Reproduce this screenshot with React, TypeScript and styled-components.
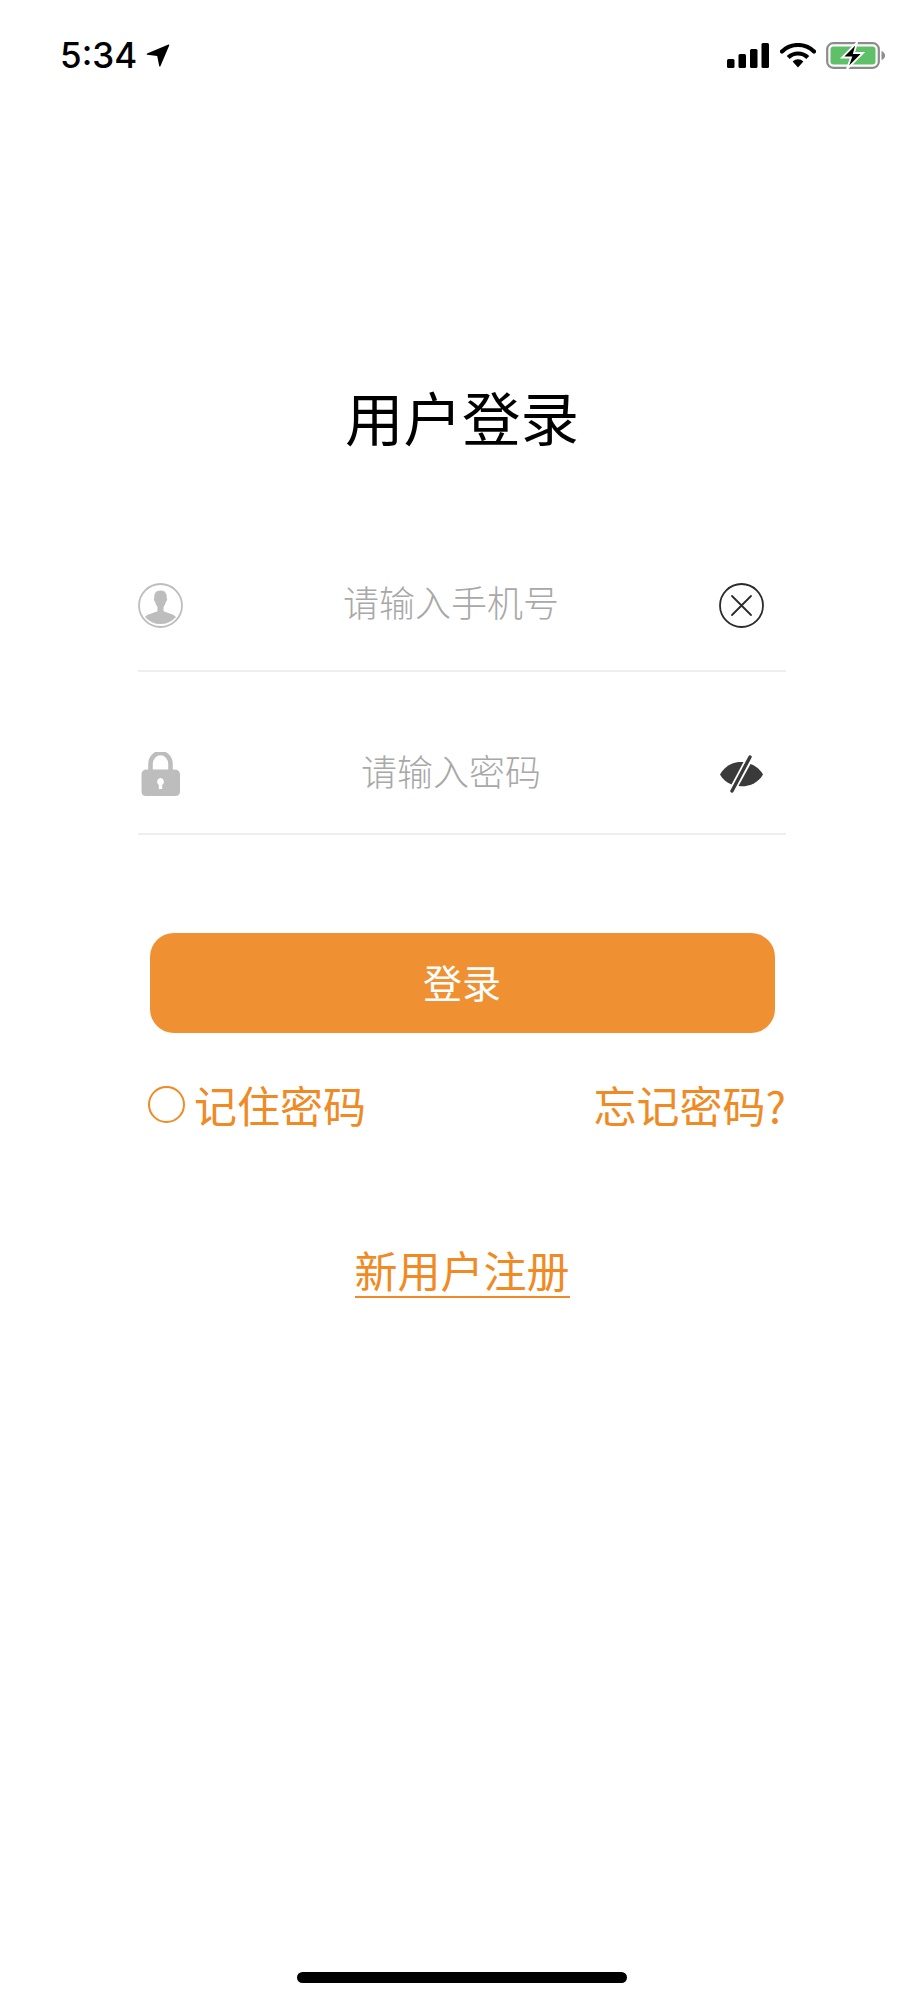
import styled, { createGlobalStyle } from 'styled-components'

const GlobalStyle = createGlobalStyle`
  html, body {
    margin: 0;
    padding: 0;
    background: #ffffff;
  }
`

const CJK = `"Noto Sans CJK SC", "Noto Sans", sans-serif`

const App = () => {
  return (
    <Page>
      <GlobalStyle />
      <StatusBar>
        <TimeBox>
          <Time>5:34</Time>
          <svg width="24" height="24" viewBox="0 0 24 24">
            <path d="M1 10.5 L22.5 1.5 Q23.6 1.2 23.2 2.4 L14.5 23 Q13.8 24 13.2 23 L11.2 13 L1.2 11.8 Q0 11.2 1 10.5 Z" fill="#000" />
          </svg>
        </TimeBox>
        <StatusIcons>
          <svg width="43" height="25" viewBox="0 0 43 25">
            <rect x="0" y="16" width="7.5" height="9" rx="1.5" fill="#000" />
            <rect x="11.5" y="11" width="7.5" height="14" rx="1.5" fill="#000" />
            <rect x="23" y="6" width="7.5" height="19" rx="1.5" fill="#000" />
            <rect x="34.5" y="0" width="7.5" height="25" rx="1.5" fill="#000" />
          </svg>
          <svg width="36" height="25" viewBox="0 0 36 25">
            <path d="M2 8.5 A23 23 0 0 1 34 8.5" fill="none" stroke="#000" strokeWidth="4.2" strokeLinecap="round" />
            <path d="M8.2 14.5 A14 14 0 0 1 27.8 14.5" fill="none" stroke="#000" strokeWidth="4.2" />
            <path d="M12.6 18.4 A8 8 0 0 1 23.4 18.4 L18 24.6 Z" fill="#000" />
          </svg>
          <svg width="60" height="27" viewBox="0 0 60 27">
            <rect x="1.2" y="1.2" width="51.6" height="24.6" rx="6" fill="none" stroke="#8c8c8c" strokeWidth="2.2" />
            <rect x="4.5" y="4.5" width="45" height="18" rx="3" fill="#60c06a" />
            <path d="M55.5 9 Q59 10.5 59 13.5 Q59 16.5 55.5 18 Z" fill="#8c8c8c" />
            <path d="M31 0.5 L16 15.5 L25 15.5 L21 27 L37 11 L28 11 Z" fill="#000" stroke="#fff" strokeWidth="1.8" />
          </svg>
        </StatusIcons>
      </StatusBar>

      <Title>用户登录</Title>

      <Form>
        <Field $gap={42}>
          <svg width="45" height="45" viewBox="0 0 45 45">
            <circle cx="22.5" cy="22.5" r="21.5" fill="#fff" stroke="#bdbdbd" strokeWidth="1.8" />
            <path d="M22.5 7.5 C17.5 7.5 16 11 16.3 15 C15.5 15.5 15.8 18 17 18.5 C17.6 21 18.6 23 19.5 24 L19.5 28 C17 30 10 30.5 7 34 A20.5 20.5 0 0 0 38 34 C35 30.5 28 30 25.5 28 L25.5 24 C26.4 23 27.4 21 28 18.5 C29.2 18 29.5 15.5 28.7 15 C29 11 27.5 7.5 22.5 7.5 Z" fill="#bdbdbd" />
          </svg>
          <Placeholder>请输入手机号</Placeholder>
          <svg width="45" height="45" viewBox="0 0 45 45">
            <circle cx="22.5" cy="22.5" r="21.5" fill="none" stroke="#2b2b2b" strokeWidth="1.8" />
            <path d="M13 13 L32 32 M32 13 L13 32" fill="none" stroke="#2b2b2b" strokeWidth="1.8" strokeLinecap="round" />
          </svg>
        </Field>
        <Field $gap={36}>
          <svg width="45" height="45" viewBox="0 0 45 45">
            <path d="M12.5 20 L12.5 12 C12.5 6 17 1 22.5 1 C28 1 32.5 6 32.5 12 L32.5 20" fill="none" stroke="#bdbdbd" strokeWidth="4.6" />
            <path fillRule="evenodd" fill="#bdbdbd" d="M8.5 17.5 L36.5 17.5 Q42 17.5 42 23 L42 39.5 Q42 44 37 44 L8 44 Q3.5 44 3.5 39.5 L3.5 23 Q3.5 17.5 8.5 17.5 Z M22.5 26 A3.8 3.8 0 0 0 20.8 33 L20.8 37 L24.2 37 L24.2 33 A3.8 3.8 0 0 0 22.5 26 Z" />
          </svg>
          <Placeholder>请输入密码</Placeholder>
          <svg width="45" height="45" viewBox="0 0 45 45">
            <path d="M1 22.5 C6 14 13 10.5 20 10 L24.5 10 L12.5 32.5 C7.5 30.5 3.5 27 1 22.5 Z" fill="#3a3a3a" />
            <path d="M44 22.5 C39 31 31 34.5 22 34.3 L19.5 34 L31.5 12 C37 14 41.5 18 44 22.5 Z" fill="#3a3a3a" />
            <path d="M31 5 L13 39" fill="none" stroke="#3a3a3a" strokeWidth="3.4" strokeLinecap="round" />
          </svg>
        </Field>
      </Form>

      <LoginButton>登录</LoginButton>

      <OptionsRow>
        <Remember>
          <RadioCircle />
          <OrangeText>记住密码</OrangeText>
        </Remember>
        <OrangeText>忘记密码?</OrangeText>
      </OptionsRow>

      <RegisterLink>新用户注册</RegisterLink>

      <HomeIndicator />
    </Page>
  )
}

export default App

const Page = styled.div`
  width: 924px;
  height: 2000px;
  background: #ffffff;
  display: flex;
  flex-direction: column;
  align-items: center;
  overflow: hidden;
  font-family: ${CJK};
`

const StatusBar = styled.div`
  width: 100%;
  box-sizing: border-box;
  height: 88px;
  padding: 22px 38px 0 60px;
  display: flex;
  align-items: center;
  justify-content: space-between;
`

const TimeBox = styled.div`
  display: flex;
  align-items: center;
  gap: 9px;
`

const Time = styled.span`
  font-family: "Inter", "Liberation Sans", sans-serif;
  font-size: 35px;
  font-weight: 500;
  color: #000;
  line-height: 40px;
`

const StatusIcons = styled.div`
  display: flex;
  align-items: center;
  gap: 10px;
`

const Title = styled.h1`
  margin: 285px 0 0;
  font-size: 58.5px;
  font-weight: 400;
  line-height: 86px;
  color: #000;
`

const Form = styled.div`
  width: 648px;
  margin-top: 124px;
  display: flex;
  flex-direction: column;
  gap: 80px;
`

const Field = styled.div<{ $gap: number }>`
  display: flex;
  align-items: center;
  padding: 0 22px ${props => props.$gap}px 0;
  border-bottom: 2px solid #eeeeee;
`

const Placeholder = styled.span`
  flex: 1;
  text-align: center;
  font-size: 36px;
  line-height: 36px;
  font-weight: 300;
  color: #a8a8a8;
  padding-bottom: 9px;
`

const LoginButton = styled.button`
  width: 625px;
  height: 100px;
  margin-top: 98px;
  padding: 0 0 5px;
  border: 0;
  border-radius: 24px;
  background: #ef9032;
  color: #fff;
  font-family: ${CJK};
  font-size: 39px;
  font-weight: 400;
`

const OptionsRow = styled.div`
  width: 640px;
  margin-top: 41px;
  margin-left: 8px;
  display: flex;
  align-items: center;
  justify-content: space-between;
`

const Remember = styled.div`
  display: flex;
  align-items: center;
  gap: 9px;
  padding-left: 2px;
`

const RadioCircle = styled.span`
  width: 33px;
  height: 33px;
  border: 2px solid #f08a24;
  border-radius: 50%;
`

const OrangeText = styled.span`
  font-size: 43px;
  line-height: 60px;
  font-weight: 400;
  color: #f08a24;
`

const RegisterLink = styled.a`
  margin-top: 108px;
  font-size: 43px;
  line-height: 54px;
  color: #f08a24;
  border-bottom: 2px solid #f08a24;
`

const HomeIndicator = styled.div`
  width: 330px;
  height: 11px;
  margin-top: auto;
  margin-bottom: 17px;
  border-radius: 6px;
  background: #000;
`
